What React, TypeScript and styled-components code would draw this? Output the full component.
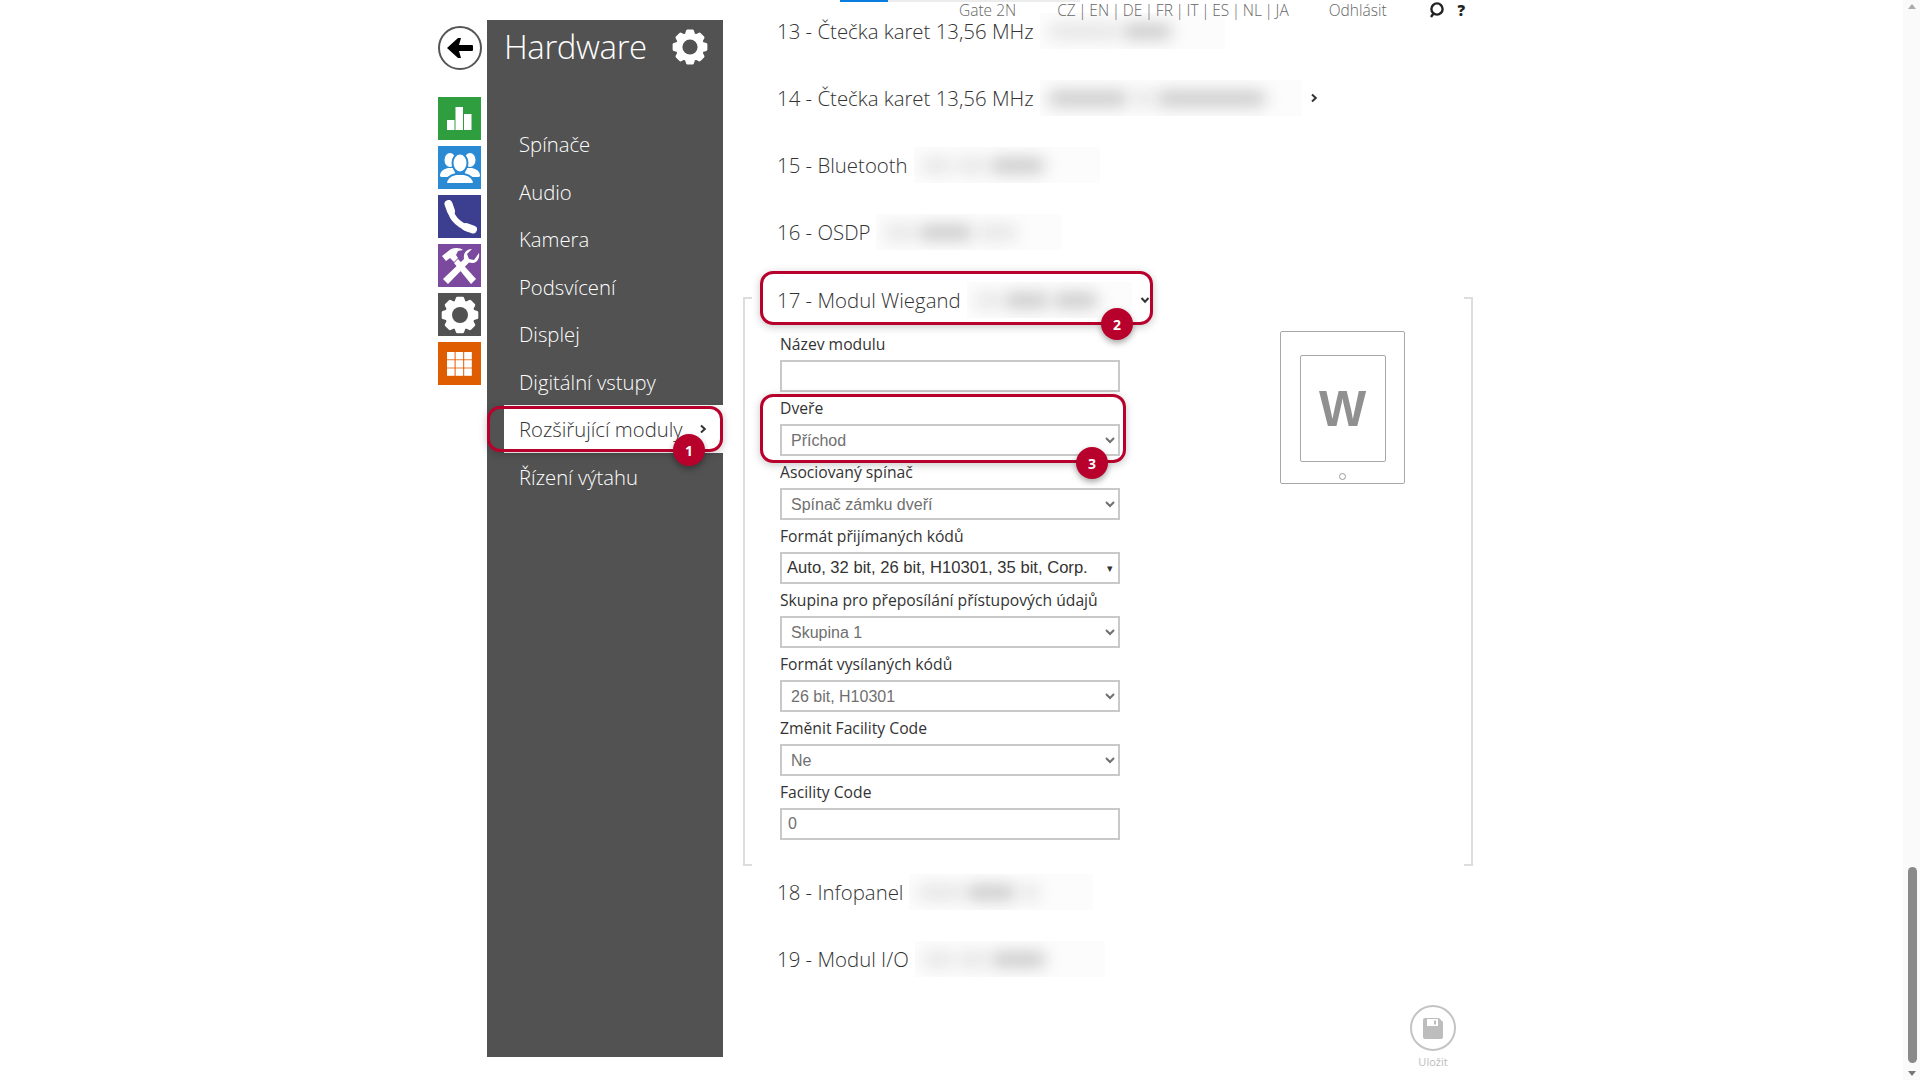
import React from "react";
import styled, { createGlobalStyle } from "styled-components";

const GlobalStyle = createGlobalStyle`
  html, body {
    margin: 0;
    padding: 0;
    height: 100%;
    overflow: hidden;
    background: #fff;
  }
  * { box-sizing: border-box; }
`;

const UI_FONT = `"Open Sans", "Noto Sans", sans-serif`;
const FORM_FONT = `"Liberation Sans", Arial, sans-serif`;
const RED = "#b8002c";

const Page = styled.div`
  position: relative;
  display: flex;
  width: 1920px;
  height: 1080px;
  padding-left: 438px;
  overflow: hidden;
  background: #fff;
  font-family: ${UI_FONT};
`;

// Left rail
const Rail = styled.nav`
  display: flex;
  flex-direction: column;
  width: 43px;
  margin-right: 6px;
  padding-top: 26px;
`;

const BackButton = styled.button`
  display: flex;
  align-items: center;
  justify-content: center;
  width: 44px;
  height: 44px;
  margin-bottom: 27px;
  padding: 0;
  border: 2px solid #555;
  border-radius: 50%;
  background: #fff;
`;

const Tile = styled.a<{ $color: string }>`
  display: flex;
  align-items: center;
  justify-content: center;
  width: 43px;
  height: 43px;
  margin-bottom: 6px;
  background: ${(p) => p.$color};
  color: #fff;
`;

// Sidebar
const Sidebar = styled.aside`
  display: flex;
  flex-direction: column;
  width: 236px;
  height: 1037px;
  margin-top: 20px;
  background: #525252;
  color: #fff;
`;

const SidebarHead = styled.header`
  display: flex;
  align-items: center;
  justify-content: space-between;
  height: 54px;
  margin-bottom: 46px;
  padding: 0 14px 0 17px;
`;

const SidebarTitle = styled.h1`
  margin: 0;
  font-size: 33px;
  font-weight: 300;
  letter-spacing: -0.4px;
  line-height: 54px;
`;

const Menu = styled.ul`
  display: flex;
  flex-direction: column;
  margin: 0;
  padding: 0;
  list-style: none;
`;

const MenuItem = styled.li<{ $active?: boolean }>`
  position: relative;
  display: flex;
  align-items: center;
  justify-content: space-between;
  height: 47.5px;
  margin-left: 17px;
  padding: 1px 15px 0 15px;
  font-size: 20.3px;
  font-weight: 300;
  background: ${(p) => (p.$active ? "#fff" : "transparent")};
  color: ${(p) => (p.$active ? "#333" : "#fff")};
`;

// Annotations laid over the screenshot
const RedFrame = styled.span<{ $top: number; $left: number; $right: number; $bottom: number }>`
  position: absolute;
  top: ${(p) => p.$top}px;
  left: ${(p) => p.$left}px;
  right: ${(p) => p.$right}px;
  bottom: ${(p) => p.$bottom}px;
  border: 3px solid ${RED};
  border-radius: 13px;
  box-shadow: 0 2px 8px rgba(0, 0, 0, 0.22);
  pointer-events: none;
`;

const Badge = styled.span<{ $left: number; $top: number }>`
  position: absolute;
  left: ${(p) => p.$left}px;
  top: ${(p) => p.$top}px;
  display: flex;
  align-items: center;
  justify-content: center;
  width: 32px;
  height: 32px;
  border-radius: 50%;
  background: ${RED};
  box-shadow: 0 3px 6px rgba(0, 0, 0, 0.35);
  color: #fff;
  font-size: 14px;
  font-weight: 700;
`;

// Main column
const Main = styled.main`
  display: flex;
  flex-direction: column;
  gap: 3px;
  width: 730px;
  margin-top: -1px;
  margin-left: 21px;
`;

const ModuleRow = styled.div`
  position: relative;
  display: flex;
  align-items: center;
  height: 64px;
  padding-left: 33px;
  color: #333;
  font-size: 20.4px;
  font-weight: 300;
  white-space: nowrap;
`;

const Redacted = styled.span<{ $width: number }>`
  display: flex;
  align-items: center;
  gap: 4px;
  width: ${(p) => p.$width}px;
  height: 36px;
  margin-left: 6px;
  padding-left: 8px;
  background: #fcfcfc;
  overflow: hidden;
`;

const Smudge = styled.span<{ $width: number; $shade: string }>`
  flex: none;
  width: ${(p) => p.$width}px;
  height: 15px;
  border-radius: 7px;
  background: ${(p) => p.$shade};
  filter: blur(8px);
`;

const Section = styled.section`
  position: relative;
  margin-top: 1px;

  &::before,
  &::after {
    content: "";
    position: absolute;
    top: 29px;
    bottom: -9px;
    width: 7px;
    border: 2px solid #ddd;
    border-width: 2px 0;
  }
  &::before {
    left: -1px;
    border-left-width: 2px;
  }
  &::after {
    right: 1px;
    border-right-width: 2px;
  }
`;

const SectionBody = styled.div`
  display: flex;
  align-items: flex-start;
  gap: 160px;
  padding: 0 0 13px 36px;
`;

const Fields = styled.div`
  display: flex;
  flex-direction: column;
  width: 340px;
`;

const Field = styled.div`
  position: relative;
  height: 64px;
`;

const Label = styled.label`
  display: block;
  height: 24px;
  margin-bottom: 4px;
  color: #333;
  font-size: 15.7px;
  line-height: 24px;
  white-space: nowrap;
`;

const controlBase = `
  display: block;
  width: 340px;
  height: 32px;
  border: 2px solid #c9c9c9;
  border-radius: 0;
  background: #fff;
  font-family: ${FORM_FONT};
  font-size: 16px;
`;

const TextInput = styled.input`
  ${controlBase}
  padding: 0 6px;
  color: #707070;
`;

const Select = styled.select`
  ${controlBase}
  padding-left: 5px;
  color: #707070;
`;

const MultiSelect = styled.div`
  ${controlBase}
  display: flex;
  align-items: center;
  justify-content: space-between;
  padding: 0 5px;
  color: #333;
  font-size: 16.6px;
  white-space: nowrap;
`;

const MultiArrow = styled.span`
  font-size: 11px;
`;

const DeviceCase = styled.div`
  display: flex;
  flex-direction: column;
  align-items: center;
  width: 125px;
  height: 153px;
  margin-top: -1px;
  padding-top: 23px;
  border: 1px solid #a8a8a8;
  border-radius: 2px;
`;

const DeviceScreen = styled.div`
  display: flex;
  align-items: center;
  justify-content: center;
  width: 86px;
  height: 107px;
  border: 1px solid #a8a8a8;
  border-radius: 2px;
  color: #909090;
  font-family: ${FORM_FONT};
  font-size: 50px;
  font-weight: 700;
`;

const DeviceDot = styled.span`
  width: 7px;
  height: 7px;
  margin-top: 11px;
  border: 1px solid #999;
  border-radius: 50%;
`;

// Top bar floats over the scrolled content
const TopBar = styled.div`
  position: absolute;
  top: 0;
  left: 840px;
  width: 640px;
  height: 20px;
  color: #666;
  font-size: 15.5px;
  font-weight: 300;
`;

const TabLine = styled.div`
  width: 240px;
  height: 2px;
  background: #ececec;

  &::before {
    content: "";
    display: block;
    width: 48px;
    height: 2px;
    background: #0a7de0;
  }
`;

const TopItems = styled.div`
  display: flex;
  align-items: center;
  height: 16px;
  padding-left: 119px;
  white-space: nowrap;
`;

const Lang = styled.span`
  margin-left: 41px;
  word-spacing: -1.4px;
`;

const Logout = styled.span`
  margin-left: 40px;
`;

const TalkIcon = styled.svg`
  margin-left: 41px;
`;

const HelpMark = styled.span`
  margin-left: 13px;
  color: #222;
  font-size: 15px;
  font-weight: 800;
`;

// Save button
const SaveBox = styled.div`
  position: absolute;
  left: 1410px;
  top: 1005px;
  display: flex;
  flex-direction: column;
  align-items: center;
  width: 46px;
`;

const SaveCircle = styled.span`
  display: flex;
  align-items: center;
  justify-content: center;
  width: 46px;
  height: 46px;
  border: 2px solid #c4c4c4;
  border-radius: 50%;
`;

const SaveLabel = styled.span`
  margin-top: 3px;
  color: #bbb;
  font-size: 11px;
`;

// Browser scrollbar
const Scrollbar = styled.div`
  position: absolute;
  top: 0;
  right: 0;
  width: 17px;
  height: 1080px;
  background: #fafafa;
`;

const ScrollThumb = styled.div`
  position: absolute;
  left: 5px;
  top: 867px;
  width: 9px;
  height: 196px;
  border-radius: 5px;
  background: #8a8a8a;
`;

const ScrollArrow = styled.div<{ $down?: boolean }>`
  position: absolute;
  left: 5px;
  ${(p) => (p.$down ? "bottom: 4px;" : "top: 4px;")}
  width: 0;
  height: 0;
  border-left: 4.5px solid transparent;
  border-right: 4.5px solid transparent;
  ${(p) => (p.$down ? "border-top: 5px solid #777;" : "border-bottom: 5px solid #aaa;")}
`;

const ChevronMark = styled.svg<{ $gap?: number }>`
  flex: none;
  margin-left: ${(p) => p.$gap ?? 0}px;
`;

const Chevron: React.FC<{ down?: boolean; size?: number; gap?: number }> = ({ down, size = 10, gap }) => (
  <ChevronMark $gap={gap} width={size} height={size} viewBox="0 0 10 10" fill="none" stroke="#333" strokeWidth="2">
    <path d={down ? "M1.5 3 5 6.8 8.5 3" : "M3 1.5 6.8 5 3 8.5"} />
  </ChevronMark>
);

const BackArrow = () => (
  <svg width="26" height="22" viewBox="0 0 26 22" fill="#000">
    <path d="M0 11 11 1h3l-2 7h13a1 1 0 0 1 1 1v4a1 1 0 0 1-1 1H12l2 7h-3z" />
  </svg>
);

const BarsIcon = () => (
  <svg width="25" height="25" viewBox="0 0 25 25" fill="#fff">
    <rect x="0" y="14" width="7.5" height="10" />
    <rect x="8.5" y="1" width="7.5" height="23" />
    <rect x="17" y="8" width="7.5" height="16" />
  </svg>
);

const PeopleIcon = () => (
  <svg width="40" height="32" viewBox="0 0 40 32" fill="#fff">
    <ellipse cx="10" cy="8" rx="5.5" ry="7" />
    <path d="M0 24c0-5 4-7 8-8h5l4 9H1z" />
    <ellipse cx="30" cy="8" rx="5.5" ry="7" />
    <path d="M40 24c0-5-4-7-8-8h-5l-4 9h16z" />
    <ellipse cx="20" cy="11" rx="7.5" ry="9.5" stroke="#2a8ad4" strokeWidth="2" />
    <path d="M6 32c0-7 5-9 10-10h8c5 1 10 3 10 10z" stroke="#2a8ad4" strokeWidth="2" />
  </svg>
);

const PhoneIcon = () => (
  <svg width="34" height="34" viewBox="0 0 34 34" fill="none" stroke="#fff" strokeLinecap="round">
    <path d="M7 6Q7 21 26 29" strokeWidth="6" />
    <path d="M5.5 4 8 11" strokeWidth="8" />
    <path d="M23 27 30 29.5" strokeWidth="8" />
  </svg>
);

const ToolsIcon = () => (
  <svg width="42" height="40" viewBox="0 0 42 40" fill="#fff">
    <path d="M3 10 12 3c5-2 10-1 12 1l-5 1-2 4 2 3-4 4-4-4-4 3z" />
    <path d="M15 17l4-4 18 20-5 5z" />
    <path d="M40 7c1 5-2 10-7 10l-3-.5L9 38l-5-5 21-20c-1-5 2-10 8-10l-5 5 2 5 5 1z" />
  </svg>
);

// eight rounded teeth round a big hole, same drawing on the tile and in the header
const gearPoints = Array.from({ length: 8 }, (_, i) => {
  const a = (i * 45 * Math.PI) / 180;
  return [
    [-17, 13.5],
    [-9, 17],
    [9, 17],
    [17, 13.5],
  ]
    .map(([deg, r]) => {
      const t = a + (deg * Math.PI) / 180;
      return `${(r * Math.cos(t)).toFixed(2)},${(r * Math.sin(t)).toFixed(2)}`;
    })
    .join(" ");
}).join(" ");

const GearIcon: React.FC<{ size: number; bg: string }> = ({ size, bg }) => (
  <svg width={size} height={size} viewBox="-20 -20 40 40">
    <polygon points={gearPoints} fill="#fff" stroke="#fff" strokeWidth="3" strokeLinejoin="round" />
    <circle r="8" fill={bg} />
  </svg>
);

const GridIcon = () => (
  <svg width="25" height="24" viewBox="0 0 25 24" fill="#fff">
    {[0, 1, 2].map((col) =>
      [0, 1, 2].map((row) => (
        <rect key={`${col}-${row}`} x={col * 8.6} y={row * 8.2} width="7.6" height="7.4" />
      )),
    )}
  </svg>
);

const TalkGlyph = () => (
  <TalkIcon width="17" height="16" viewBox="0 0 17 16" fill="none" stroke="#222" strokeWidth="2.4">
    <circle cx="9" cy="7" r="5.6" />
    <path d="M5.5 11.5 3 15" />
  </TalkIcon>
);

const FloppyIcon = () => (
  <svg width="20" height="21" viewBox="0 0 20 21" fill="#bdbdbd">
    <path d="M2 0h14l4 4v15a2 2 0 0 1-2 2H2a2 2 0 0 1-2-2V2a2 2 0 0 1 2-2z" />
    <rect x="4" y="1" width="11" height="7" fill="#fff" />
    <rect x="11" y="2.5" width="2" height="4" fill="#bdbdbd" />
  </svg>
);

const tiles = [
  { color: "#2f9e3f", icon: <BarsIcon /> },
  { color: "#2a8ad4", icon: <PeopleIcon /> },
  { color: "#3c3f8f", icon: <PhoneIcon /> },
  { color: "#7b4a9e", icon: <ToolsIcon /> },
  { color: "#525252", icon: <GearIcon size={40} bg="#525252" /> },
  { color: "#e05c00", icon: <GridIcon /> },
];

const menuItems = [
  "Spínače",
  "Audio",
  "Kamera",
  "Podsvícení",
  "Displej",
  "Digitální vstupy",
  "Rozšiřující moduly",
  "Řízení výtahu",
];

type Blob = [number, string];

const light = "#e4e4e4";
const mid = "#c8c8c8";

const Module: React.FC<{
  title: string;
  width: number;
  blobs: Blob[];
  children?: React.ReactNode;
}> = ({ title, width, blobs, children }) => (
  <ModuleRow>
    {title}
    <Redacted $width={width}>
      {blobs.map(([w, shade], i) => (
        <Smudge key={i} $width={w} $shade={shade} />
      ))}
    </Redacted>
    {children}
  </ModuleRow>
);

const App: React.FC = () => {
  return (
    <Page>
      <GlobalStyle />
      <Rail>
        <BackButton aria-label="Zpět">
          <BackArrow />
        </BackButton>
        {tiles.map((tile) => (
          <Tile key={tile.color} $color={tile.color}>
            {tile.icon}
          </Tile>
        ))}
      </Rail>

      <Sidebar>
        <SidebarHead>
          <SidebarTitle>Hardware</SidebarTitle>
          <GearIcon size={38} bg="#525252" />
        </SidebarHead>
        <Menu>
          {menuItems.map((item) => {
            const active = item === "Rozšiřující moduly";
            return (
              <MenuItem key={item} $active={active}>
                {item}
                {active && (
                  <>
                    <Chevron />
                    <RedFrame $top={1} $left={-17} $right={0} $bottom={1} />
                    <Badge $left={169} $top={29}>
                      1
                    </Badge>
                  </>
                )}
              </MenuItem>
            );
          })}
        </Menu>
      </Sidebar>

      <Main>
        <Module
          title="13 - Čtečka karet 13,56 MHz"
          width={185}
          blobs={[
            [70, light],
            [50, mid],
          ]}
        />
        <Module
          title="14 - Čtečka karet 13,56 MHz"
          width={262}
          blobs={[
            [80, mid],
            [20, light],
            [110, mid],
          ]}
        >
          <Chevron gap={7} />
        </Module>
        <Module
          title="15 - Bluetooth"
          width={186}
          blobs={[
            [30, light],
            [30, light],
            [55, mid],
          ]}
        />
        <Module
          title="16 - OSDP"
          width={186}
          blobs={[
            [30, light],
            [55, mid],
            [40, light],
          ]}
        />
        <Section>
          <Module
            title="17 - Modul Wiegand"
            width={165}
            blobs={[
              [25, light],
              [45, mid],
              [45, mid],
            ]}
          >
            <Chevron down gap={8} />
            <RedFrame $top={3} $left={16} $right={321} $bottom={7} />
            <Badge $left={357} $top={40}>
              2
            </Badge>
          </Module>
          <SectionBody>
            <Fields>
              <Field>
                <Label>Název modulu</Label>
                <TextInput defaultValue="" />
              </Field>
              <Field>
                <Label>Dveře</Label>
                <Select defaultValue="Příchod">
                  <option>Příchod</option>
                </Select>
                <RedFrame $top={-2} $left={-20} $right={-6} $bottom={-3} />
                <Badge $left={296} $top={51}>
                  3
                </Badge>
              </Field>
              <Field>
                <Label>Asociovaný spínač</Label>
                <Select defaultValue="Spínač zámku dveří">
                  <option>Spínač zámku dveří</option>
                </Select>
              </Field>
              <Field>
                <Label>Formát přijímaných kódů</Label>
                <MultiSelect>
                  Auto, 32 bit, 26 bit, H10301, 35 bit, Corp.
                  <MultiArrow>▾</MultiArrow>
                </MultiSelect>
              </Field>
              <Field>
                <Label>Skupina pro přeposílání přístupových údajů</Label>
                <Select defaultValue="Skupina 1">
                  <option>Skupina 1</option>
                </Select>
              </Field>
              <Field>
                <Label>Formát vysílaných kódů</Label>
                <Select defaultValue="26 bit, H10301">
                  <option>26 bit, H10301</option>
                </Select>
              </Field>
              <Field>
                <Label>Změnit Facility Code</Label>
                <Select defaultValue="Ne">
                  <option>Ne</option>
                </Select>
              </Field>
              <Field>
                <Label>Facility Code</Label>
                <TextInput defaultValue="0" />
              </Field>
            </Fields>
            <DeviceCase>
              <DeviceScreen>W</DeviceScreen>
              <DeviceDot />
            </DeviceCase>
          </SectionBody>
        </Section>
        <Module
          title="18 - Infopanel"
          width={184}
          blobs={[
            [45, light],
            [50, mid],
            [20, light],
          ]}
        />
        <Module
          title="19 - Modul I/O"
          width={190}
          blobs={[
            [30, light],
            [30, light],
            [55, mid],
          ]}
        />
      </Main>

      <TopBar>
        <TabLine />
        <TopItems>
          <span>Gate 2N</span>
          <Lang>CZ | EN | DE | FR | IT | ES | NL | JA</Lang>
          <Logout>Odhlásit</Logout>
          <TalkGlyph />
          <HelpMark>?</HelpMark>
        </TopItems>
      </TopBar>

      <SaveBox>
        <SaveCircle>
          <FloppyIcon />
        </SaveCircle>
        <SaveLabel>Uložit</SaveLabel>
      </SaveBox>

      <Scrollbar>
        <ScrollArrow />
        <ScrollThumb />
        <ScrollArrow $down />
      </Scrollbar>
    </Page>
  );
};

export default App;
